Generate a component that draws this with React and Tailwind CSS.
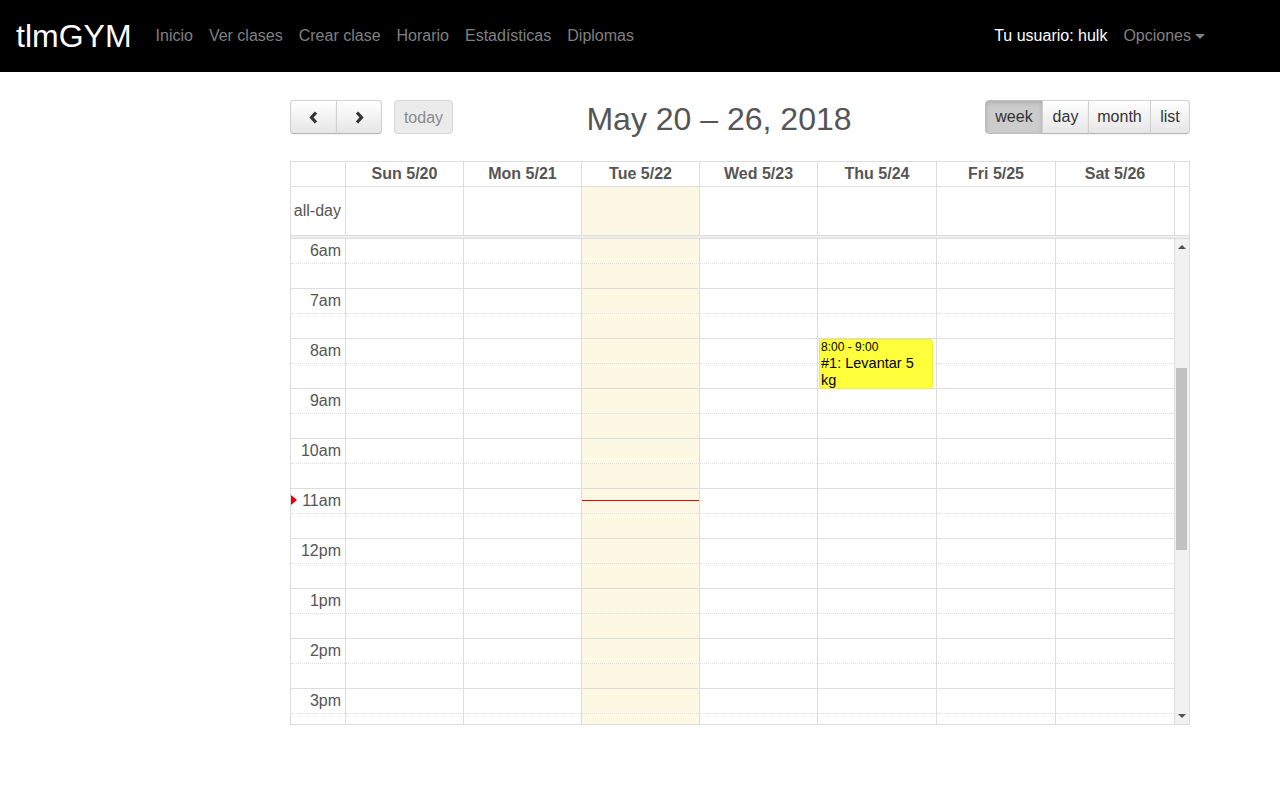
import React from 'react';

const days = ['Sun 5/20', 'Mon 5/21', 'Tue 5/22', 'Wed 5/23', 'Thu 5/24', 'Fri 5/25', 'Sat 5/26'];
const hours = ['6am', '7am', '8am', '9am', '10am', '11am', '12pm', '1pm', '2pm', '3pm'];

// fullcalendar gives the last three columns one px more
const colW = (i) => (i < 4 ? 'w-[118px]' : 'w-[119px]');

const Slots = ({ labels }) => (
  <>
    {hours.map((h) => (
      <React.Fragment key={h}>
        <div className="h-[25px] shrink-0 border-b border-dotted border-[#ddd] text-right pr-1 leading-[24px] text-[#555]">
          {labels ? h : null}
        </div>
        <div className="h-[25px] shrink-0 border-b border-[#ddd]"></div>
      </React.Fragment>
    ))}
  </>
);

const Chevron = ({ dir }) => (
  <svg width="10" height="13" viewBox="0 0 10 13" className="mx-auto">
    <polyline
      points={dir === 'left' ? '7,1.5 2.5,6.5 7,11.5' : '3,1.5 7.5,6.5 3,11.5'}
      fill="none"
      stroke="#333"
      strokeWidth="3.2"
    />
  </svg>
);

const btn =
  'h-[34px] border border-[#d0d0d0] border-b-[#b3b3b3] bg-gradient-to-b from-white to-[#e6e6e6] text-[#333] shadow-[inset_0_1px_0_rgba(255,255,255,0.2),0_1px_2px_rgba(0,0,0,0.05)]';

export default function App() {
  return (
    <div className="min-h-[800px] bg-white font-['Liberation_Sans',Arial,sans-serif] text-[16px]">
      {/* navbar */}
      <nav className="h-[72px] bg-black flex items-center pl-4 pr-[67px]">
        <span className="text-white text-[32px] mr-4 leading-none">tlmGYM</span>
        <div className="flex">
          {['Inicio', 'Ver clases', 'Crear clase', 'Horario', 'Estadísticas', 'Diplomas'].map((l) => (
            <span key={l} className="px-2 text-[#808080]">{l}</span>
          ))}
        </div>
        <div className="ml-auto flex items-center">
          <span className="px-2 text-white">Tu usuario: hulk</span>
          <span className="px-2 text-[#808080] flex items-center">
            Opciones
            <span className="ml-[4px] w-0 h-0 border-x-[5px] border-x-transparent border-t-[5px] border-t-[#808080]"></span>
          </span>
        </div>
      </nav>

      <div className="w-[900px] ml-[290px] pt-7">
        {/* toolbar */}
        <div className="flex items-center h-[34px]">
          <div className="flex items-center">
            <div className="flex">
              <button className={`${btn} w-[47px] rounded-l-[4px] flex items-center`}><Chevron dir="left" /></button>
              <button className={`${btn} w-[46px] -ml-px rounded-r-[4px] flex items-center`}><Chevron dir="right" /></button>
            </div>
            <button className="ml-3 h-[34px] w-[59px] rounded-[4px] border border-[#d6d6d6] bg-[#ebebeb] text-[#8a8a8a] pt-px">today</button>
          </div>
          <h2 className="flex-1 mt-[4px] text-center text-[32px] text-[#555] leading-none">May 20 – 26, 2018</h2>
          <div className="flex">
            <button className="h-[34px] w-[58px] rounded-l-[4px] border border-[#bdbdbd] bg-[#cccccc] text-[#333] shadow-[inset_0_2px_4px_rgba(0,0,0,0.15)]">week</button>
            <button className={`${btn} w-[47px] -ml-px`}>day</button>
            <button className={`${btn} w-[63px] -ml-px`}>month</button>
            <button className={`${btn} w-[40px] -ml-px rounded-r-[4px]`}>list</button>
          </div>
        </div>

        {/* calendar */}
        <div className="mt-[27px] border border-[#ddd] text-[#555]">
          <div className="flex h-[25px] border-b border-[#ddd]">
            <div className="w-[55px] shrink-0 border-r border-[#ddd]"></div>
            {days.map((d, i) => (
              <div key={d} className={`${colW(i)} shrink-0 border-r border-[#ddd] text-center font-bold leading-[23px]`}>{d}</div>
            ))}
            <div className="flex-1"></div>
          </div>
          <div className="flex h-[49px] border-b border-[#ddd]">
            <div className="w-[55px] shrink-0 border-r border-[#ddd] text-right pr-1 leading-[48px]">all-day</div>
            {days.map((d, i) => (
              <div key={d} className={`${colW(i)} shrink-0 border-r border-[#ddd] ${i === 2 ? 'bg-[#fcf8e3]' : ''}`}></div>
            ))}
            <div className="flex-1"></div>
          </div>
          <div className="h-[3px] bg-[#eee] border-b border-[#ddd]"></div>

          <div className="flex h-[485px] overflow-hidden">
            <div className="relative w-[55px] shrink-0 border-r border-[#ddd] flex flex-col">
              <Slots labels />
              <span className="absolute left-0 top-[256px] w-0 h-0 border-y-[5px] border-y-transparent border-l-[6px] border-l-[#e00]"></span>
            </div>
            {days.map((d, i) => (
              <div key={d} className={`relative ${colW(i)} shrink-0 border-r border-[#ddd] flex flex-col ${i === 2 ? 'bg-[#fcf8e3]' : ''}`}>
                <Slots />
                {i === 2 && <div className="absolute left-0 right-0 top-[261px] h-px bg-[#e00]"></div>}
                {i === 4 && (
                  <div className="absolute left-[1px] right-[3px] top-[100px] h-[50px] rounded-[3px] border border-[#f0f030] bg-[#ffff3b] text-black px-px">
                    <div className="text-[12px] leading-[15px]">8:00 - 9:00</div>
                    <div className="text-[14.5px] leading-[17px]">#1: Levantar 5 kg</div>
                  </div>
                )}
              </div>
            ))}
            <div className="relative flex-1 bg-[#f1f1f1]">
              <span className="absolute left-[3px] top-[6px] w-0 h-0 border-x-[4px] border-x-transparent border-b-[4px] border-b-[#505050]"></span>
              <div className="absolute left-[1px] right-[2px] top-[129px] h-[182px] bg-[#c1c1c1]"></div>
              <span className="absolute left-[3px] bottom-[6px] w-0 h-0 border-x-[4px] border-x-transparent border-t-[4px] border-t-[#505050]"></span>
            </div>
          </div>
        </div>
      </div>
    </div>
  );
}
